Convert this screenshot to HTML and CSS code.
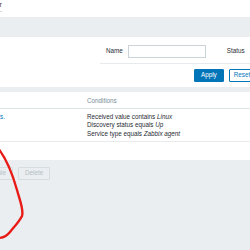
FILE: index.html
```html
<!DOCTYPE html>
<html lang="en">
<head>
  <meta charset="UTF-8">
  <title>Discovery rules</title>
  <link rel="stylesheet" href="styles.css">
</head>
<body>

  <!-- Header strip -->
  <div class="topbar">
    <span class="tab">Filter</span>
  </div>

  <!-- Filter -->
  <form class="filter">
    <div class="filter-row">
      <label class="filter-label" for="filter_name">Name</label>
      <input class="filter-input" id="filter_name" type="text">
      <span class="filter-label status-label">Status</span>
    </div>
    <div class="filter-sep"></div>
    <div class="filter-buttons">
      <button type="button" class="btn">Apply</button>
      <button type="button" class="btn btn-alt">Reset</button>
    </div>
  </form>

  <!-- Discovery rule list -->
  <div class="list">
    <div class="list-head">
      <div class="cell"><span class="name">Name</span></div>
      <div class="cell">Conditions</div>
    </div>
    <div class="list-row">
      <div class="cell"><a class="name link" href="#">Linux servers.</a></div>
      <div class="cell">
        <div>Received value contains <em>Linux</em></div>
        <div>Discovery status equals <em>Up</em></div>
        <div>Service type equals <em>Zabbix agent</em></div>
      </div>
    </div>
  </div>

  <!-- Mass actions -->
  <div class="actions">
    <button type="button" class="btn-off first" disabled>Disable</button>
    <button type="button" class="btn-off" disabled>Delete</button>
  </div>

  <!-- Red hand-drawn mark -->
  <svg class="scribble" width="250" height="250" viewBox="0 0 250 250">
    <path d="M-2 148 C 5 157, 12 172, 17 190 C 20 201, 24 210, 22 216 C 19 222, 14 227, 10 232 C 6 237, 2 238, -2 238"
          fill="none" stroke="#e81b16" stroke-width="2.4" stroke-linecap="round" stroke-linejoin="round"/>
  </svg>

</body>
</html>
```

FILE: styles.css
```css
body {
  margin: 0;
  background: #ebeef0;
  font-family: "Liberation Sans", Arial, sans-serif;
  font-size: 6.3px;
  line-height: 8.4px;
  color: #1f2c33;
  overflow: hidden;
}

/* Header strip */
.topbar {
  background: #fff;
  height: 17px;
  padding-top: 1px;
  box-sizing: border-box;
}

.tab {
  display: inline-block;
  margin-left: -12.2px;
  padding-bottom: 2px;
  border-bottom: 1px solid #d4dadd;
}

/* Filter */
.filter {
  margin: 20px 0 0;
  background: #fff;
  height: 50px;
  padding-top: 8px;
  box-sizing: border-box;
}

.filter-row {
  display: flex;
  align-items: center;
  padding-left: 106px;
  height: 13px;
}

.filter-label {
  margin-right: 5px;
  white-space: nowrap;
}

.status-label {
  margin-left: 21px;
}

.filter-input {
  width: 78px;
  height: 13px;
  box-sizing: border-box;
  border: 1px solid #cbd4d9;
  margin: 0;
  padding: 0 3px;
  font: inherit;
}

.filter-sep {
  margin: 5px 0 0 100px;
  border-top: 1px solid #e7eaec;
}

.filter-buttons {
  display: flex;
  gap: 5px;
  padding-left: 194px;
  margin-top: 5px;
}

.btn {
  height: 13px;
  padding: 0 6px;
  border: 1px solid #0275b8;
  border-radius: 1px;
  background: #0275b8;
  color: #fff;
  font: inherit;
  white-space: nowrap;
}

.btn-alt {
  background: #fff;
  color: #0275b8;
  padding: 0 4px;
}

/* List */
.list {
  margin-top: 5px;
  background: #fff;
  height: 68px;
}

.list-head,
.list-row {
  display: grid;
  grid-template-columns: 87px 1fr;
}

.list-head {
  height: 17px;
  line-height: 17px;
  color: #768d99;
  border-bottom: 1px solid #dfe4e7;
  box-sizing: border-box;
}

.list-row {
  padding: 4px 0 3px;
  border-bottom: 1px solid #e8ebed;
}

.cell {
  white-space: nowrap;
}

.name {
  display: inline-block;
  margin-left: -34.2px;
}

.link {
  color: #0275b8;
  text-decoration: none;
}

em {
  font-style: italic;
}

/* Mass actions */
.actions {
  display: flex;
  gap: 5px;
  padding-top: 7px;
}

.btn-off {
  height: 12.5px;
  padding: 0 6px;
  border: 1px solid #d6dde0;
  border-radius: 1px;
  background: #ebeef0;
  color: #b3c0c6;
  font: inherit;
}

.first {
  margin-left: -22px;
}

.scribble {
  position: absolute;
  left: 0;
  top: 0;
  pointer-events: none;
}
```
